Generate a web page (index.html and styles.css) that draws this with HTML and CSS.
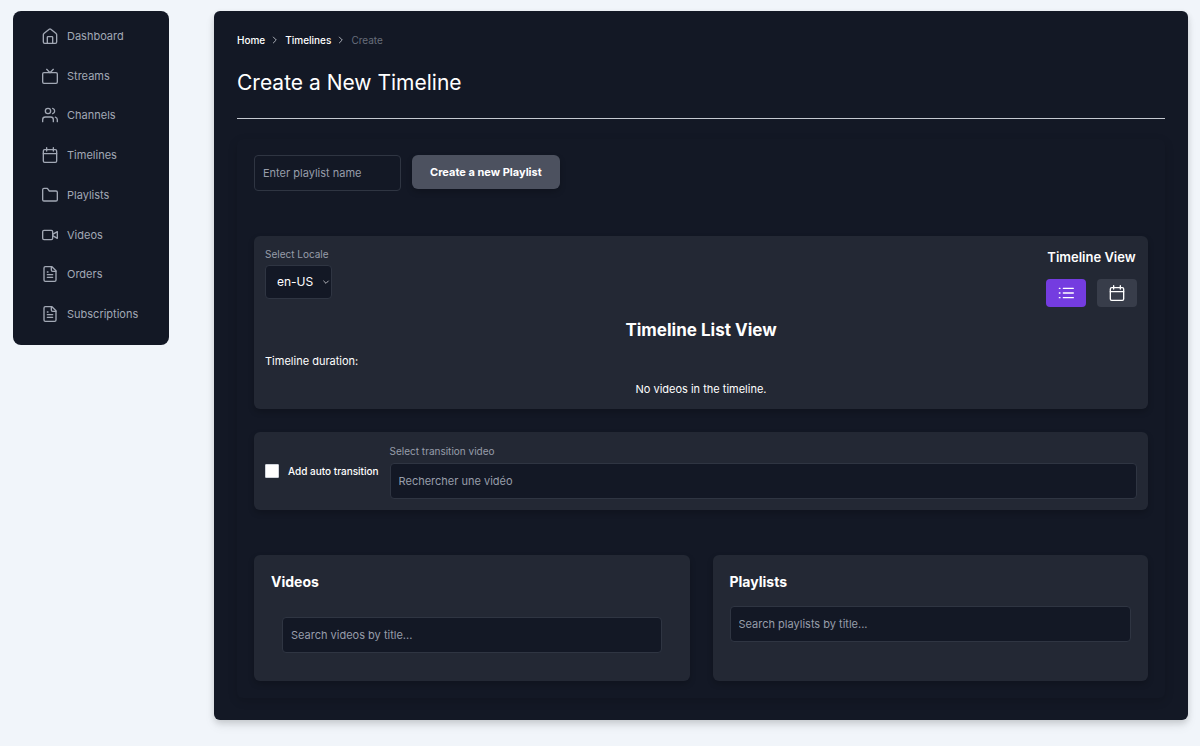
FILE: index.html
```html
<!DOCTYPE html>
<html lang="en">
<head>
<meta charset="utf-8">
<meta name="viewport" content="width=device-width, initial-scale=1">
<title>Create a New Timeline</title>
<link rel="stylesheet" href="styles.css">
</head>
<body>
<svg class="sprite" aria-hidden="true">
  <symbol id="calendar" viewBox="0 0 24 24"><rect x="2" y="4" width="20" height="19" rx="2"/><path d="M17 1v5M7 1v5M2 10h20"/></symbol>
  <symbol id="file" viewBox="0 0 24 24"><path d="M15 1H5a2 2 0 0 0-2 2v18a2 2 0 0 0 2 2h14a2 2 0 0 0 2-2V7Z"/><path d="M14 1v5a2 2 0 0 0 2 2h5M9 9H8M16 13H8M16 17H8"/></symbol>
  <symbol id="chevron" viewBox="0 0 24 24"><path d="m8 19 7-7-7-7"/></symbol>
</svg>
<div class="layout">
  <nav class="sidebar" aria-label="Main">
    <ul class="nav-list">
      <li><a class="nav-link" href="#"><svg class="icon" viewBox="0 0 24 24"><path d="M2 10a2 2 0 0 1 .8-1.6l8-6.5a2 2 0 0 1 2.4 0l8 6.5A2 2 0 0 1 22 10v11a2 2 0 0 1-2 2H4a2 2 0 0 1-2-2z"/><path d="M16 23v-9a1 1 0 0 0-1-1H9a1 1 0 0 0-1 1v9"/></svg>Dashboard</a></li>
      <li><a class="nav-link" href="#"><svg class="icon" viewBox="0 0 24 24"><rect x="1" y="7" width="22" height="16" rx="2"/><path d="m17 2-5 5-5-5"/></svg>Streams</a></li>
      <li><a class="nav-link" href="#"><svg class="icon" viewBox="0 0 24 24"><path d="M17 22v-3a4 4 0 0 0-4-4H5a4 4 0 0 0-4 4v3"/><circle cx="9" cy="6" r="4"/><path d="M23 22v-3a4 4 0 0 0-3-3.87M16 2.13a4 4 0 0 1 0 7.75"/></svg>Channels</a></li>
      <li><a class="nav-link" href="#"><svg class="icon"><use href="#calendar"/></svg>Timelines</a></li>
      <li><a class="nav-link" href="#"><svg class="icon" viewBox="0 0 24 24"><path d="M23 19a2 2 0 0 1-2 2H3a2 2 0 0 1-2-2V4a2 2 0 0 1 2-2h5l3 4h10a2 2 0 0 1 2 2z"/></svg>Playlists</a></li>
      <li><a class="nav-link" href="#"><svg class="icon" viewBox="0 0 24 24"><rect x="1" y="5" width="15" height="14" rx="2"/><path d="m16 11 7-4v10l-7-4z"/></svg>Videos</a></li>
      <li><a class="nav-link" href="#"><svg class="icon"><use href="#file"/></svg>Orders</a></li>
      <li><a class="nav-link" href="#"><svg class="icon"><use href="#file"/></svg>Subscriptions</a></li>
    </ul>
  </nav>
  <main class="content">
    <nav class="breadcrumb" aria-label="Breadcrumb">
      <a href="#">Home</a><svg class="crumb-sep"><use href="#chevron"/></svg>
      <a href="#">Timelines</a><svg class="crumb-sep"><use href="#chevron"/></svg>
      <span class="crumb-current">Create</span>
    </nav>
    <h1 class="page-title">Create a New Timeline</h1>
    <div class="panel">
      <form class="create-form">
        <input class="field name-field" type="text" placeholder="Enter playlist name" aria-label="Playlist name">
        <button class="create-button" type="button">Create a new Playlist</button>
      </form>
      <section class="card timeline">
        <div class="timeline-head">
          <div class="locale">
            <label class="label" for="locale">Select Locale</label>
            <div class="select-wrap">
              <select class="locale-select" id="locale"><option>en-US</option></select>
              <svg class="select-arrow" viewBox="0 0 24 24"><path d="m5 9 7 7 7-7"/></svg>
            </div>
          </div>
          <div class="view">
            <h2 class="view-title">Timeline View</h2>
            <div class="view-buttons">
              <button class="view-button active" type="button" aria-label="List view"><svg class="icon" viewBox="0 0 24 24"><path d="M8 5h15M8 12h15M8 19h15M2 5h1M2 12h1M2 19h1"/></svg></button>
              <button class="view-button" type="button" aria-label="Calendar view"><svg class="icon"><use href="#calendar"/></svg></button>
            </div>
          </div>
        </div>
        <h2 class="list-title">Timeline List View</h2>
        <p class="duration">Timeline duration:</p>
        <p class="empty">No videos in the timeline.</p>
      </section>
      <section class="card transition">
        <label class="auto"><input class="checkbox" type="checkbox">Add auto transition</label>
        <div class="transition-field">
          <label class="label" for="transition">Select transition video</label>
          <input class="field" id="transition" type="text" placeholder="Rechercher une vidéo">
        </div>
      </section>
      <div class="columns">
        <section class="card column">
          <h2 class="column-title">Videos</h2>
          <div class="video-search"><input class="field" type="text" placeholder="Search videos by title..." aria-label="Search videos"></div>
        </section>
        <section class="card column">
          <h2 class="column-title">Playlists</h2>
          <input class="field" type="text" placeholder="Search playlists by title..." aria-label="Search playlists">
        </section>
      </div>
    </div>
  </main>
</div>
</body>
</html>
```
FILE: styles.css
```css
* { box-sizing: border-box; }
body {
  margin: 0;
  background: #f1f5fa;
  color: #fff;
  font: 11px/16px Inter, sans-serif;
}
h1, h2, p, ul { margin: 0; padding: 0; }
ul { list-style: none; }
a { color: inherit; text-decoration: none; }
input, select, button { font: inherit; color: inherit; }
svg { fill: none; stroke: currentColor; stroke-width: 2; stroke-linecap: round; stroke-linejoin: round; flex: none; }
.sprite { position: absolute; width: 0; height: 0; }
.icon { width: 16px; height: 16px; }

.layout {
  display: grid;
  grid-template-columns: 156px minmax(0, 1fr);
  column-gap: 45px;
  align-items: start;
  padding: 11px 12px 24px 13px;
}
.sidebar { background: #131825; border-radius: 8px; padding: 11px 12px 17px; }
.nav-list { display: flex; flex-direction: column; justify-content: space-between; min-height: 306px; }
.nav-link { display: flex; align-items: center; gap: 9px; height: 28px; padding-left: 17px; color: #a2a8b5; }

.content {
  background: #131825;
  border-radius: 6px;
  padding: 21px 23px 22px;
  box-shadow: 0 3px 6px rgba(0, 0, 0, .14), 0 6px 12px rgba(0, 0, 0, .06);
}
.breadcrumb { display: flex; align-items: center; gap: 5px; font-size: 10px; font-weight: 500; }
.crumb-sep { width: 10px; height: 10px; color: #c4c8d0; }
.crumb-current { color: #686e7b; font-weight: 400; }
.page-title {
  margin: 19px 0 20px;
  padding-bottom: 19px;
  border-bottom: 1px solid #c5c9d1;
  font-size: 21px;
  line-height: 32px;
  font-weight: 400;
}
.panel {
  display: flex;
  flex-direction: column;
  gap: 23px;
  padding: 16px 17px 17px;
  border-radius: 6px;
  box-shadow: 0 3px 10px rgba(0, 0, 0, .15);
}
.create-form { display: flex; align-items: flex-start; gap: 11px; margin-bottom: 22px; }
.field {
  display: block;
  width: 100%;
  height: 36px;
  padding: 0 8px;
  background: #131825;
  border: 1px solid #2f3542;
  border-radius: 4px;
}
.field::placeholder { color: #979daa; opacity: 1; }
.name-field { width: 147px; }
.create-button {
  height: 34px;
  padding: 0 18px;
  border: 0;
  border-radius: 6px;
  background: #4c515f;
  font-weight: 700;
  box-shadow: 0 3px 6px rgba(0, 0, 0, .2);
}
.card { background: #232834; border-radius: 6px; box-shadow: 0 3px 6px rgba(0, 0, 0, .2); }
.label { display: block; color: #979daa; font-size: 10px; }

.timeline { padding: 10px 11px 12px; }
.timeline-head { display: flex; justify-content: space-between; align-items: flex-start; }
.select-wrap { position: relative; margin-top: 3px; width: 67px; }
.locale-select {
  appearance: none;
  display: block;
  width: 100%;
  height: 34px;
  padding: 0 11px;
  background: #131825;
  border: 1px solid #2f3542;
  border-radius: 4px;
  font-size: 12px;
}
.select-arrow { position: absolute; right: 2px; top: 13px; width: 8px; height: 8px; pointer-events: none; }
.view { display: flex; flex-direction: column; gap: 14px; }
.view-title { padding-top: 3px; text-align: center; font-size: 13px; line-height: 16px; font-weight: 600; }
.view-buttons { display: flex; gap: 11px; }
.view-button {
  display: flex;
  align-items: center;
  justify-content: center;
  width: 40px;
  height: 28px;
  padding: 0;
  border: 0;
  border-radius: 4px;
  background: #383d4a;
}
.view-button.active { background: #743ce0; }
.list-title { margin: 11px 0; text-align: center; font-size: 17px; line-height: 24px; font-weight: 700; }
.empty { margin-top: 12px; text-align: center; }

.transition { display: flex; align-items: center; gap: 11px; padding: 11px; margin-bottom: 22px; }
.auto { display: flex; align-items: center; gap: 9px; font-size: 10px; font-weight: 500; white-space: nowrap; }
.checkbox { appearance: none; width: 14px; height: 14px; margin: 0; background: #fff; border: 1px solid #cfd3da; border-radius: 1px; }
.checkbox:checked { background: #743ce0; }
.transition-field { flex: 1; }
.transition-field .label { margin-bottom: 4px; }

.columns { display: grid; grid-template-columns: 1fr 1fr; gap: 23px; }
.column { padding: 17px 17px 28px; }
.column-title { margin-bottom: 14px; font-size: 14px; line-height: 20px; font-weight: 700; }
.video-search { padding: 11px 11px 0; }
```
